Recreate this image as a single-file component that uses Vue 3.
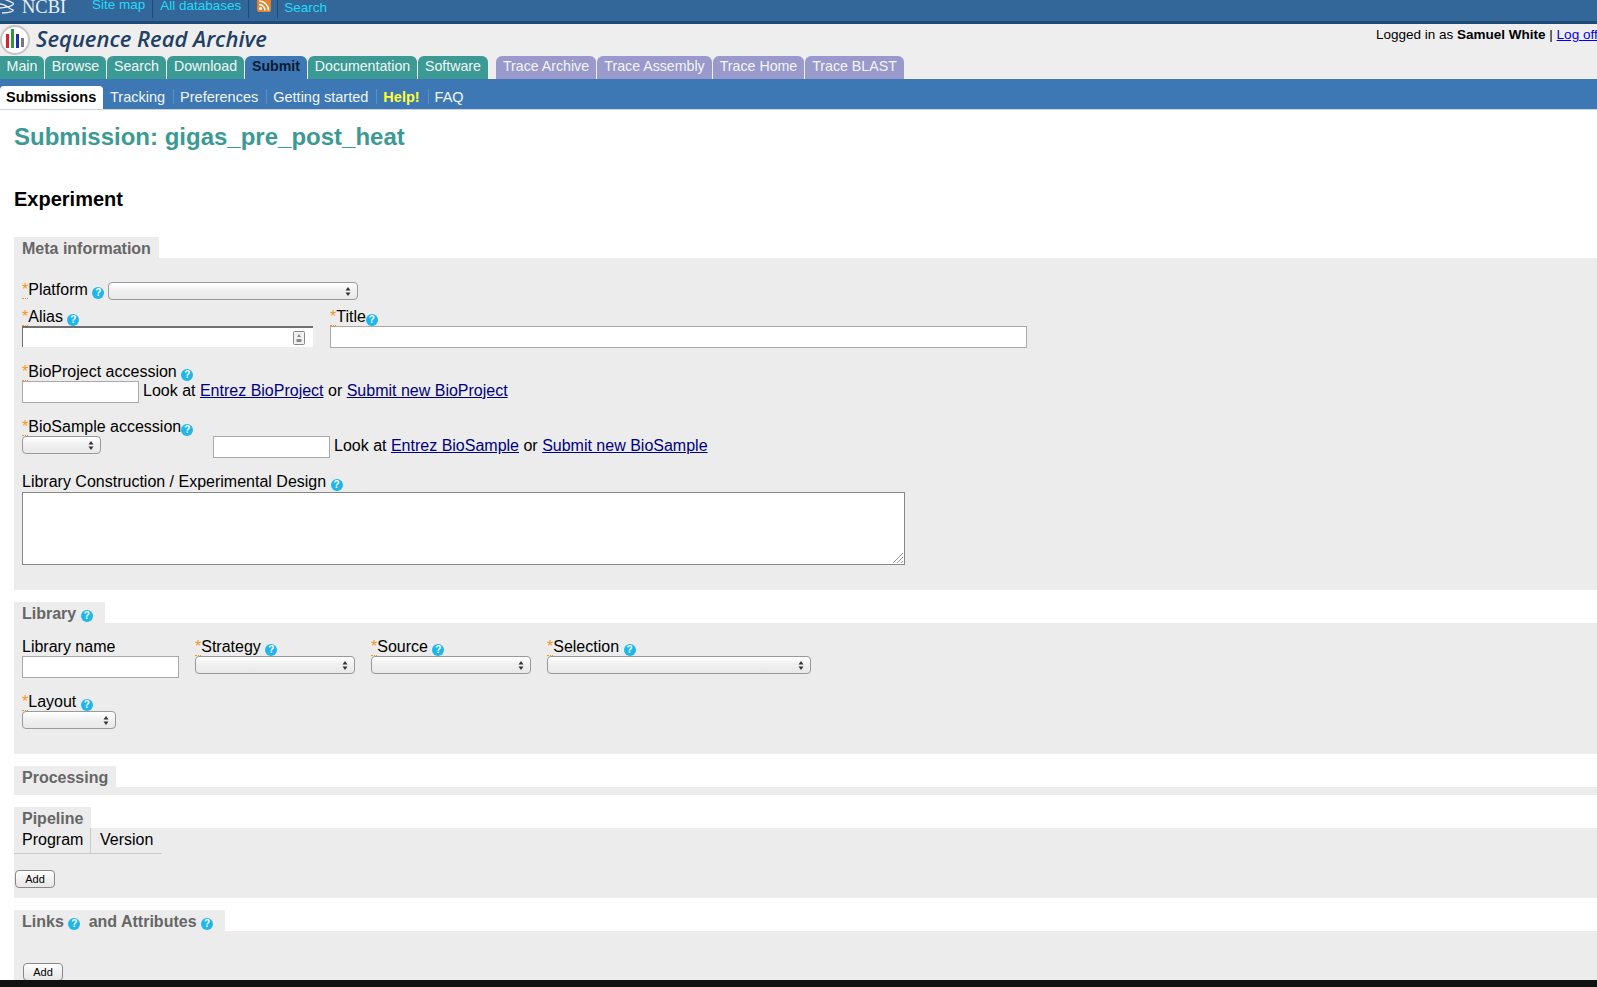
<script setup>
const tealTabs = [
  { t: 'Main', w: 44 }, { t: 'Browse', w: 61 }, { t: 'Search', w: 59 }, { t: 'Download', w: 77 }
]
const tealTabs2 = [
  { t: 'Documentation', w: 109 }, { t: 'Software', w: 70 }
]
const purpleTabs = [
  { t: 'Trace Archive', w: 100 }, { t: 'Trace Assembly', w: 115 }, { t: 'Trace Home', w: 91 }, { t: 'Trace BLAST', w: 99 }
]
</script>

<template>
  <div class="page">
    <div class="topbar">
      <svg class="waves" width="16" height="21" viewBox="0 0 16 21"><path d="M0 1c5 1 9 3 13 5c2 2-3 4-13 5M0 7c6 0 9 5 13 6c1 1-3 3-11 3" fill="none" stroke="#e8eef5" stroke-width="1.3"/></svg>
      <span class="ncbi">NCBI</span>
      <a class="tlink first">Site map</a>
      <a class="tlink sep dbs">All databases</a>
      <span class="rss sep"><svg width="14" height="13" viewBox="0 0 14 13"><rect width="14" height="13" rx="2" fill="#e8812c"/><circle cx="3.500" cy="9.500" r="1.600" fill="#fff"/><path d="M2 5.500a6 6 0 0 1 6 6M2 2a9.500 9.500 0 0 1 9.500 9.500" fill="none" stroke="#fff" stroke-width="1.600"/></svg></span>
      <a class="tlink sep low">Search</a>
    </div>

    <div class="header">
      <div class="brand">
        <svg width="31" height="31" viewBox="0 0 31 31" class="logo">
          <circle cx="15" cy="15" r="14" fill="#fff" stroke="#c4c4c4" stroke-width="2"/>
          <rect x="6" y="9" width="3" height="14" fill="#d8232a"/>
          <rect x="11" y="4" width="3" height="19" fill="#2a9a3a"/>
          <rect x="16" y="9" width="3" height="14" fill="#1a2fb0"/>
          <rect x="21" y="13" width="3" height="9" fill="#777"/>
        </svg>
        <span class="brandtext">Sequence Read Archive</span>
      </div>
      <div class="login">Logged in as <b>Samuel White</b> | <a class="logoff">Log off</a></div>
      <div class="tabs">
        <span v-for="x in tealTabs" :key="x.t" class="tab teal" :style="{ width: x.w + 'px' }">{{ x.t }}</span>
        <span class="tab active">Submit</span>
        <span v-for="x in tealTabs2" :key="x.t" class="tab teal" :style="{ width: x.w + 'px' }">{{ x.t }}</span>
        <span class="tabgap"></span>
        <span v-for="x in purpleTabs" :key="x.t" class="tab purple" :style="{ width: x.w + 'px' }">{{ x.t }}</span>
      </div>
    </div>

    <div class="subnav">
      <span class="subcur">Submissions</span>
      <span class="sub">Tracking</span>
      <span class="sub div">Preferences</span>
      <span class="sub div">Getting started</span>
      <span class="sub div help-link">Help!</span>
      <span class="sub div">FAQ</span>
    </div>

    <h1 class="title">Submission: gigas_pre_post_heat</h1>
    <h2 class="exp">Experiment</h2>

    <div class="legend">Meta information</div>
    <section class="body meta">
      <div class="row platform">
        <label class="lbl"><span class="star">*</span>Platform <i class="q">?</i></label>
        <div class="sel w250"><svg class="arrows" width="6" height="9" viewBox="0 0 6 9"><path d="M3 0l2.500 3.500h-5zM3 9l2.500-3.500h-5z" fill="#333"/></svg></div>
      </div>
      <div class="row r-alias">
        <div class="field">
          <label class="lbl"><span class="star">*</span>Alias <i class="q">?</i></label>
          <div class="alias">
            <svg class="key" width="12" height="14" viewBox="0 0 12 14"><rect x=".5" y=".5" width="11" height="13" rx="1" fill="#f1f1f1" stroke="#888"/><path d="M6 3l2 3H4zM3.500 8h5v3h-5z" fill="#888"/></svg>
          </div>
        </div>
        <div class="field f-title">
          <label class="lbl"><span class="star">*</span>Title<i class="q">?</i></label>
          <input class="inp w697" />
        </div>
      </div>
      <div class="field mt14">
        <label class="lbl"><span class="star">*</span>BioProject accession <i class="q">?</i></label>
        <div class="ctl">
          <input class="inp w117" />
          <span class="txt">Look at <a class="lk">Entrez BioProject</a> or <a class="lk">Submit new BioProject</a></span>
        </div>
      </div>
      <div class="field mt14">
        <label class="lbl"><span class="star">*</span>BioSample accession<i class="q">?</i></label>
        <div class="ctl">
          <div class="sel w79"><svg class="arrows" width="6" height="9" viewBox="0 0 6 9"><path d="M3 0l2.500 3.500h-5zM3 9l2.500-3.500h-5z" fill="#333"/></svg></div>
          <input class="inp w117 ml112" />
          <span class="txt">Look at <a class="lk">Entrez BioSample</a> or <a class="lk">Submit new BioSample</a></span>
        </div>
      </div>
      <div class="field mt14">
        <label class="lbl lbl-lc">Library Construction / Experimental Design <i class="q">?</i></label>
        <div class="area">
          <svg class="grip" width="12" height="12" viewBox="0 0 12 12"><path d="M1 11L11 1M5 11l6-6M9 11l2-2" stroke="#999" stroke-width="1" fill="none"/></svg>
        </div>
      </div>
    </section>

    <div class="legend gap12 withq">Library <i class="q">?</i></div>
    <section class="body lib">
      <div class="row">
        <div class="field">
          <label class="lbl">Library name</label>
          <input class="inp w157" />
        </div>
        <div class="field ml16">
          <label class="lbl"><span class="star">*</span>Strategy <i class="q">?</i></label>
          <div class="sel w160"><svg class="arrows" width="6" height="9" viewBox="0 0 6 9"><path d="M3 0l2.500 3.500h-5zM3 9l2.500-3.500h-5z" fill="#333"/></svg></div>
        </div>
        <div class="field ml16">
          <label class="lbl"><span class="star">*</span>Source <i class="q">?</i></label>
          <div class="sel w160"><svg class="arrows" width="6" height="9" viewBox="0 0 6 9"><path d="M3 0l2.500 3.500h-5zM3 9l2.500-3.500h-5z" fill="#333"/></svg></div>
        </div>
        <div class="field ml16">
          <label class="lbl"><span class="star">*</span>Selection <i class="q">?</i></label>
          <div class="sel w264"><svg class="arrows" width="6" height="9" viewBox="0 0 6 9"><path d="M3 0l2.500 3.500h-5zM3 9l2.500-3.500h-5z" fill="#333"/></svg></div>
        </div>
      </div>
      <div class="field mt14">
        <label class="lbl"><span class="star">*</span>Layout <i class="q">?</i></label>
        <div class="sel w94"><svg class="arrows" width="6" height="9" viewBox="0 0 6 9"><path d="M3 0l2.500 3.500h-5zM3 9l2.500-3.500h-5z" fill="#333"/></svg></div>
      </div>
    </section>

    <div class="legend gap12">Processing</div>
    <section class="body proc"></section>

    <div class="legend gap12">Pipeline</div>
    <section class="body pipe">
      <div class="thead">
        <span class="th th1">Program</span>
        <span class="th th2">Version</span>
      </div>
      <button class="btn b1">Add</button>
    </section>

    <div class="legend gap12 withq">Links <i class="q">?</i> <span class="and">and Attributes</span> <i class="q">?</i></div>
    <section class="body links">
      <button class="btn b2">Add</button>
    </section>

    <div class="black"></div>
  </div>
</template>

<style scoped>
.page {
  width: 1597px;
  height: 987px;
  display: flex;
  flex-direction: column;
  overflow: hidden;
  background: #fff;
  font-family: "Liberation Sans", Arial, sans-serif;
  color: #000;
}
.topbar {
  height: 21px;
  flex: none;
  background: #336699;
  border-bottom: 3px solid #1e4a76;
  display: flex;
  align-items: flex-start;
  overflow: hidden;
  position: relative;
}
.waves { flex: none; margin-top: -3px; }
.ncbi {
  font-family: "Liberation Serif", serif;
  font-size: 18.500px;
  line-height: 20px;
  color: #e8eef5;
  margin: -3px 0 0 6px;
  width: 70px;
  flex: none;
}
.tlink {
  color: #22dcf8;
  font-size: 13.500px;
  line-height: 16px;
  margin-top: -3px;
  white-space: nowrap;
}
.tlink.first { padding-right: 7px; }
.sep {
  border-left: 1px solid #1e4a76;
  padding: 0 7px;
  height: 18px;
}
.tlink.dbs { margin-top: 0; line-height: 11px; height: 18px; }
.rss { flex: none; width: 14px; padding: 0 6px 0 8px; }
.rss svg { display: block; margin-top: -1px; }
.tlink.low { margin-top: 0; line-height: 15px; padding-left: 6px; }
.header {
  flex: none;
  height: 55px;
  background: #eeeeee;
  position: relative;
  display: flex;
  flex-direction: column;
}
.brand {
  height: 32px;
  display: flex;
  align-items: center;
}
.logo { flex: none; }
.brandtext {
  font-family: "Open Sans", sans-serif;
  font-style: italic;
  font-weight: 600;
  font-size: 22px;
  color: #1f3f66;
  margin: 0 0 5px 5px;
  white-space: nowrap;
}
.login {
  position: absolute;
  top: 2px;
  left: 1376px;
  font-size: 13.500px;
  line-height: 17px;
  white-space: nowrap;
}
.logoff { color: #0000ee; text-decoration: underline; }
.tabs {
  display: flex;
  height: 23px;
  gap: 1px;
}
.tab {
  flex: none;
  height: 23px;
  border-radius: 6px 6px 0 0;
  color: #f2f6f6;
  font-size: 14.200px;
  line-height: 20px;
  text-align: center;
  white-space: nowrap;
}
.tab.teal { background: #3b9a94; }
.tab.teal:first-child { border-top-left-radius: 0; }
.tab.purple { background: #9999cc; }
.tab.active {
  background: #3d78b5;
  color: #0a1a33;
  font-weight: bold;
  width: 62px;
}
.tabgap { width: 6px; flex: none; }
.subnav {
  flex: none;
  height: 30px;
  background: #3d78b5;
  border-bottom: 1px solid #c9d6e2;
  display: flex;
  align-items: flex-end;
  font-size: 14.500px;
}
.subcur {
  background: #fff;
  width: 103px;
  box-sizing: border-box;
  padding-left: 6px;
  height: 23px;
  border-radius: 4px 4px 0 0;
  font-weight: bold;
  line-height: 23px;
  white-space: nowrap;
}
.sub {
  color: #f2f6f6;
  height: 23px;
  line-height: 23px;
  padding: 0 7px;
  white-space: nowrap;
}
.sub.div { position: relative; margin-left: 1px; }
.sub.div::before {
  content: "";
  position: absolute;
  left: 0;
  top: 3px;
  bottom: 5px;
  width: 1px;
  background: #5b8fc4;
}
.sub.help-link { color: #ffff33; font-weight: bold; }
.title {
  margin: 12px 0 0 14px;
  font-size: 24px;
  line-height: 30px;
  font-weight: bold;
  color: #3b9a94;
  flex: none;
}
.exp {
  margin: 34px 0 0 14px;
  font-size: 20px;
  line-height: 26px;
  font-weight: bold;
  flex: none;
}
.legend {
  align-self: flex-start;
  margin: 25px 0 0 14px;
  height: 21px;
  background: #ececec;
  color: #666;
  font-weight: bold;
  font-size: 16px;
  line-height: 23px;
  padding: 0 8px;
  flex: none;
  white-space: nowrap;
}
.legend .q { vertical-align: 0; }
.legend.gap12 { margin-top: 12px; }
.legend.withq { padding-right: 12px; }
.and { margin-left: 4px; }
.body {
  margin-left: 14px;
  background: #ececec;
  flex: none;
  padding: 0 8px;
  box-sizing: border-box;
  position: relative;
}
.meta { height: 332px; padding-top: 23px; }
.lib { height: 131px; padding-top: 14px; }
.proc { height: 8px; }
.pipe { height: 70px; padding: 0; }
.links { flex: 1 1 0; min-height: 0; padding-top: 32px; overflow: hidden; }
.black { height: 7px; background: #111; flex: none; }
.row { display: flex; align-items: flex-start; }
.platform { align-items: center; height: 19px; }
.platform .lbl { margin-right: 4px; }
.r-alias { margin-top: 7px; }
.field { display: flex; flex-direction: column; align-items: flex-start; }
.f-title { margin-left: 17px; }
.mt14 { margin-top: 14px; }
.ml16 { margin-left: 16px; }
.lbl {
  font-size: 16px;
  line-height: 20px;
  height: 18px;
  margin-bottom: 1px;
  white-space: nowrap;
  color: #000;
  display: block;
}
.platform .lbl { line-height: 18px; }
.lbl-lc { margin-bottom: 2px; }
.star {
  color: #f7941d;
  border-bottom: 1px dotted #f7941d;
}
.q {
  display: inline-block;
  width: 12px;
  height: 12px;
  border-radius: 50%;
  background: #1fb6ea;
  color: #fff;
  font-style: normal;
  font-weight: bold;
  font-size: 10px;
  line-height: 12px;
  text-align: center;
  vertical-align: -1px;
}
.ctl { display: flex; align-items: flex-start; }
.inp {
  display: block;
  height: 22px;
  box-sizing: border-box;
  border: 1px solid #a9a9a9;
  background: #fff;
  padding: 0;
  margin: 0;
  border-radius: 0;
  outline: none;
  flex: none;
}
.inp.ml112 { margin-left: 112px; }
.w697 { width: 697px; }
.w117 { width: 117px; }
.w157 { width: 157px; }
.txt {
  font-size: 16px;
  line-height: 20px;
  margin-left: 4px;
  white-space: nowrap;
}
.lk { color: #00007f; text-decoration: underline; }
.alias {
  width: 291px;
  height: 21px;
  box-sizing: border-box;
  background: #fff;
  border-top: 2px solid #707070;
  border-left: 1px solid #707070;
  position: relative;
}
.key { position: absolute; right: 8px; top: 3px; }
.sel {
  height: 18px;
  box-sizing: border-box;
  border: 1px solid #999;
  border-radius: 4px;
  background: linear-gradient(#fff, #f1f1f1 45%, #e8e8e8);
  position: relative;
  flex: none;
}
.arrows { position: absolute; right: 6px; top: 4px; }
.w250 { width: 250px; }
.w79 { width: 79px; }
.w160 { width: 160px; }
.w264 { width: 264px; }
.w94 { width: 94px; }
.area {
  width: 883px;
  height: 73px;
  box-sizing: border-box;
  background: #fff;
  border: 1px solid #888;
  position: relative;
}
.grip { position: absolute; right: 0; bottom: 0; }
.thead {
  display: flex;
  width: 148px;
  height: 26px;
  border-bottom: 1px solid #c8c8c8;
  box-sizing: border-box;
  font-size: 16px;
}
.th { line-height: 23px; }
.th1 { width: 77px; padding-left: 8px; box-sizing: border-box; border-right: 1px solid #c8c8c8; }
.th2 { padding-left: 9px; }
.btn {
  display: block;
  width: 40px;
  height: 18px;
  box-sizing: border-box;
  border: 1px solid #888;
  border-radius: 4px;
  background: linear-gradient(#fff, #f1f1f1 50%, #e6e6e6);
  font-family: "Liberation Sans", Arial, sans-serif;
  font-size: 11px;
  line-height: 16px;
  padding: 0;
  color: #000;
}
.b1 { margin: 16px 0 0 1px; }
.b2 { margin: 0 0 0 1px; }
</style>

<style>
html, body { margin: 0; overflow: hidden; background: #fff; }
</style>
